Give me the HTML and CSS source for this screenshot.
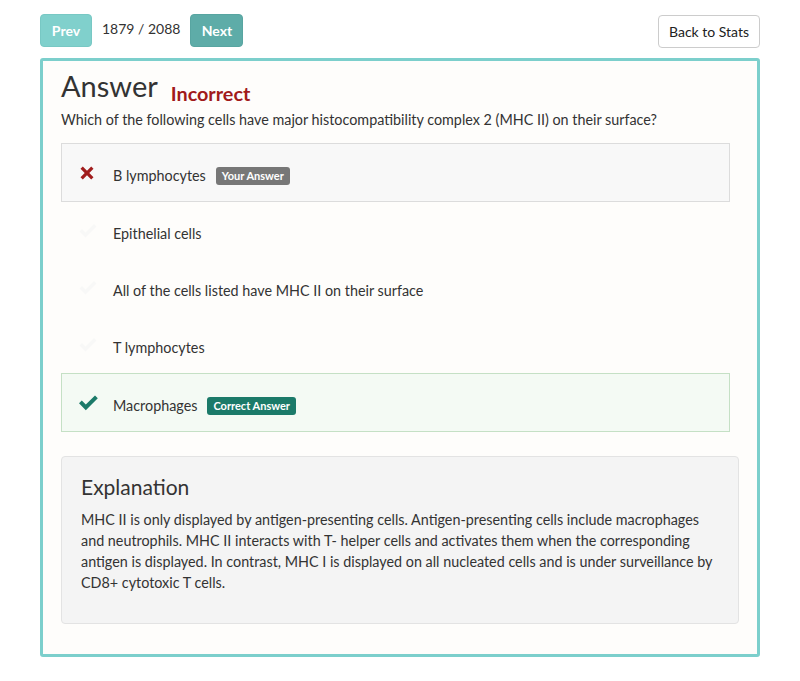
FILE: index.html
```html
<!DOCTYPE html>
<html>
<head>
<meta charset="utf-8">
<link rel="stylesheet" href="styles.css">
</head>
<body>
<div class="page">
  <div class="topbar">
    <div class="nav">
      <button class="btn btn-prev">Prev</button>
      <span class="counter">1879 / 2088</span>
      <button class="btn btn-next">Next</button>
    </div>
    <button class="btn btn-back">Back to Stats</button>
  </div>
  <div class="card">
    <div class="title-row">
      <h1 class="title">Answer</h1>
      <span class="verdict">Incorrect</span>
    </div>
    <p class="question">Which of the following cells have major histocompatibility complex 2 (MHC II) on their surface?</p>
    <ul class="options">
      <li class="option wrong">
        <span class="icon"><svg width="18" height="18" viewBox="0 0 18 18"><path d="M2.5 4.8 L4.8 2.5 L9 6.7 L13.2 2.5 L15.5 4.8 L11.3 9 L15.5 13.2 L13.2 15.5 L9 11.3 L4.8 15.5 L2.5 13.2 L6.7 9 Z" fill="#a11d1d"/></svg></span>
        <span class="label">B lymphocytes</span>
        <span class="badge badge-grey">Your Answer</span>
      </li>
      <li class="option">
        <span class="icon faint"><svg width="20" height="16" viewBox="0 0 20 16"><path d="M1.5 8.5 L4 6 L7.5 9.5 L16 1 L18.5 3.5 L7.5 14.5 Z" fill="currentColor"/></svg></span>
        <span class="label">Epithelial cells</span>
      </li>
      <li class="option">
        <span class="icon faint"><svg width="20" height="16" viewBox="0 0 20 16"><path d="M1.5 8.5 L4 6 L7.5 9.5 L16 1 L18.5 3.5 L7.5 14.5 Z" fill="currentColor"/></svg></span>
        <span class="label">All of the cells listed have MHC II on their surface</span>
      </li>
      <li class="option">
        <span class="icon faint"><svg width="20" height="16" viewBox="0 0 20 16"><path d="M1.5 8.5 L4 6 L7.5 9.5 L16 1 L18.5 3.5 L7.5 14.5 Z" fill="currentColor"/></svg></span>
        <span class="label">T lymphocytes</span>
      </li>
      <li class="option right">
        <span class="icon check"><svg width="21" height="16" viewBox="0 0 21 16"><path d="M1 8.2 L3.8 5.4 L7.8 9.4 L17 0.5 L19.8 3.3 L7.8 15.2 Z" fill="#1b7a69"/></svg></span>
        <span class="label">Macrophages</span>
        <span class="badge badge-green">Correct Answer</span>
      </li>
    </ul>
    <div class="explanation">
      <h2 class="exp-title">Explanation</h2>
      <p class="exp-text">MHC II is only displayed by antigen-presenting cells. Antigen-presenting cells include macrophages and neutrophils. MHC II interacts with T- helper cells and activates them when the corresponding antigen is displayed. In contrast, MHC I is displayed on all nucleated cells and is under surveillance by CD8+ cytotoxic T cells.</p>
    </div>
  </div>
</div>
</body>
</html>
```
FILE: styles.css
```css
* { box-sizing: border-box; }
html, body { margin: 0; padding: 0; background: #ffffff; }
body {
  font-family: Lato, "Open Sans", sans-serif;
  color: #333;
  font-size: 14.35px;
}
.page {
  padding: 14px 40px 0 40px;
}
.topbar {
  display: flex;
  justify-content: space-between;
  align-items: center;
  height: 33px;
}
.nav {
  display: flex;
  align-items: center;
}
.btn {
  font-family: inherit;
  font-size: 14px;
  border-radius: 4px;
  height: 33px;
  padding: 0 12px;
  cursor: pointer;
}
.btn-prev {
  background: #80d0cc;
  border: 1px solid #78c8c4;
  color: #fff;
  font-weight: 700;
  width: 52px;
  padding: 0;
}
.btn-next {
  background: #5eaca8;
  border: 1px solid #58a5a1;
  color: #fff;
  font-weight: 700;
  width: 53px;
  padding: 0;
}
.counter {
  font-size: 14px;
  color: #333;
  margin: 0 10px 0 10px;
  position: relative;
  top: -2px;
}
.btn-back {
  background: #fff;
  border: 1px solid #ccc;
  color: #222;
  width: 102px;
  padding: 0;
  height: 33px;
  margin-top: 1px;
}
.card {
  margin-top: 11px;
  border: 3px solid #7ccfcc;
  border-radius: 3px;
  background: #fefdfb;
  padding: 8px 18px 31px 18px;
  height: 599px;
}
.title-row {
  display: flex;
  align-items: flex-end;
  height: 34px;
}
.title {
  margin: 0;
  font-size: 29px;
  font-weight: 400;
  color: #333;
  line-height: 34px;
}
.verdict {
  color: #a11a1a;
  font-weight: 700;
  font-size: 19.8px;
  margin-left: 13px;
  line-height: 24px;
  position: relative;
  top: 2px;
}
.question {
  margin: 7px 0 13px 0;
  font-size: 14.35px;
  line-height: 20px;
  color: #333;
}
.options {
  list-style: none;
  margin: 0 9px 24px 0;
  padding: 0;
}
.option {
  display: flex;
  align-items: center;
  height: 57px;
  padding: 0 16px;
  border: 1px solid transparent;
}
.option.wrong {
  background: #f8f8f8;
  border-color: #dcdcdc;
  height: 59px;
}
.option.right {
  background: #f4faf4;
  border-color: #c5e0c5;
  height: 59px;
}
.icon {
  width: 35px;
  display: flex;
  align-items: center;
}
.icon.faint { color: #f8f8f7; }
.check { width: 35px; }
.label {
  font-size: 14.35px;
  color: #333;
  margin-top: 6px;
}
.badge {
  display: inline-block;
  margin-left: 10px;
  margin-top: 6px;
  font-size: 11px;
  font-weight: 700;
  color: #fff;
  border-radius: 3px;
  padding: 3px 6px 3px;
  line-height: 12px;
}
.badge-grey { background: #777; }
.badge-green { background: #1b7a69; }
.explanation {
  background: #f4f4f4;
  border: 1px solid #e3e3e3;
  border-radius: 4px;
  padding: 16px 20px 20px 19px;
  height: 168px;
}
.exp-title {
  margin: 0 0 8px 0;
  font-size: 21px;
  font-weight: 400;
  color: #333;
  line-height: 28px;
}
.exp-text {
  margin: 0;
  font-size: 14.35px;
  line-height: 21px;
  color: #333;
}
```
